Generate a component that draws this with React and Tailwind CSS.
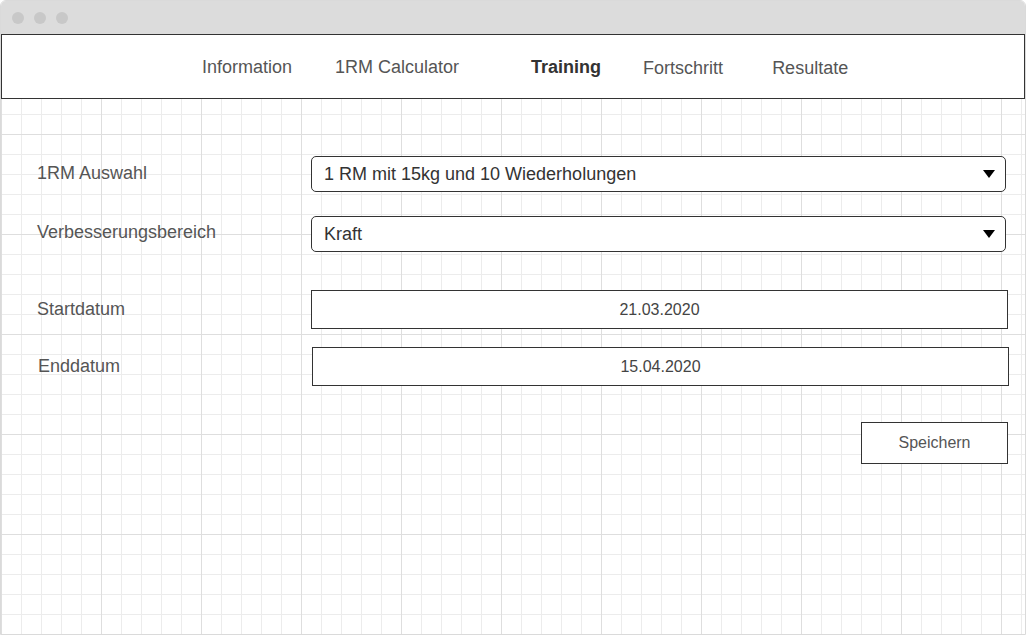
import React from 'react';

const NAV = [
  { label: 'Information', cls: 'ml-[200px]' },
  { label: '1RM Calculator', cls: 'ml-[43px]' },
  { label: 'Training', cls: 'ml-[72px] font-bold text-[#333]' },
  { label: 'Fortschritt', cls: 'ml-[42px] mt-[2px]' },
  { label: 'Resultate', cls: 'ml-[49px] mt-[2px]' },
];

function Caret() {
  return (
    <svg width="12" height="8" viewBox="0 0 12 8" className="shrink-0">
      <polygon points="0,0 12,0 6,8" fill="#000" />
    </svg>
  );
}

function SelectBox({ value }) {
  return (
    <div className="w-[695px] h-[36px] border border-[#333] rounded-[5px] bg-white flex items-center pl-[12px] pr-[10px]">
      <span className="flex-1 text-[18px] text-[#333]">{value}</span>
      <Caret />
    </div>
  );
}

function DateBox({ value }) {
  return (
    <div className="w-[697px] h-[39px] border border-[#333] bg-white flex items-center justify-center text-[16px] text-[#444]">
      {value}
    </div>
  );
}

export default function App() {
  return (
    <div className="w-[1026px] h-[635px] bg-white font-['Liberation_Sans',Arial,sans-serif]">
      <div className="w-full h-full border border-[#dadada] rounded-t-[6px] overflow-hidden flex flex-col">
        <div className="h-[33px] bg-[#dcdcdc] flex items-center pl-[11px] gap-[10px] shrink-0">
          <span className="w-[12px] h-[12px] rounded-full bg-[#c8c8c8]" />
          <span className="w-[12px] h-[12px] rounded-full bg-[#c8c8c8]" />
          <span className="w-[12px] h-[12px] rounded-full bg-[#c8c8c8]" />
        </div>

        <div className="flex-1 flex flex-col bg-white bg-[linear-gradient(to_right,#dedede_1px,transparent_1px),linear-gradient(to_bottom,#dedede_1px,transparent_1px),linear-gradient(to_right,#ececec_1px,transparent_1px),linear-gradient(to_bottom,#ececec_1px,transparent_1px)] bg-[size:100px_100px,100px_100px,20px_20px,20px_20px]">
          <div className="h-[65px] border border-[#333] bg-white flex items-center text-[18px] text-[#555] shrink-0">
            <div className="flex items-center mt-[2px]">
              {NAV.map(n => (
                <span key={n.label} className={n.cls}>{n.label}</span>
              ))}
            </div>
          </div>

          <div className="pl-[36px] pt-[57px] flex flex-col text-[18px] text-[#555]">
            <div className="flex items-center">
              <span className="w-[274px] -mt-[1px]">1RM Auswahl</span>
              <SelectBox value="1 RM mit 15kg und 10 Wiederholungen" />
            </div>
            <div className="flex items-center mt-[24px]">
              <span className="w-[274px] -mt-[3px]">Verbesserungsbereich</span>
              <SelectBox value="Kraft" />
            </div>
            <div className="flex items-center mt-[38px]">
              <span className="w-[274px]">Startdatum</span>
              <DateBox value="21.03.2020" />
            </div>
            <div className="flex items-center mt-[18px] pl-[1px]">
              <span className="w-[274px]">Enddatum</span>
              <DateBox value="15.04.2020" />
            </div>
            <div className="flex mt-[36px] pl-[824px]">
              <button className="w-[147px] h-[42px] border border-[#333] bg-white text-[16px] text-[#555]">
                Speichern
              </button>
            </div>
          </div>
        </div>
      </div>
    </div>
  );
}
